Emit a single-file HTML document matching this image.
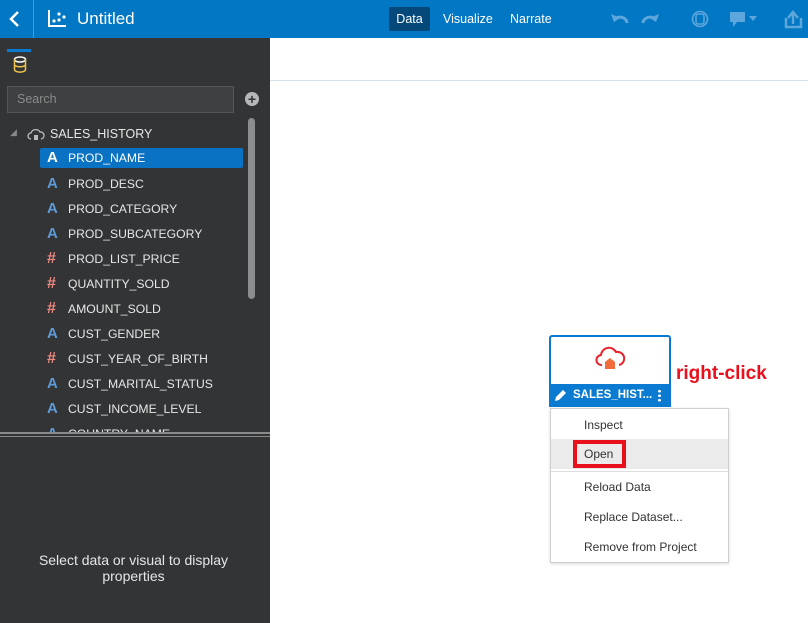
<!DOCTYPE html>
<html><head><style>
*{margin:0;padding:0;box-sizing:border-box}
body{width:808px;height:623px;overflow:hidden;font-family:"Liberation Sans",sans-serif;background:#fff;position:relative}
.hdr{position:absolute;left:0;top:0;width:808px;height:38px;background:#0277c4}
.abs{position:absolute}
.left{position:absolute;left:0;top:38px;width:270px;height:585px;background:#333436}
.item{position:absolute;left:40px;height:20px;width:203px;color:#e6e6e6;font-size:12.2px;line-height:20px}
.item span.t{position:absolute;left:28px}
.ic{position:absolute;left:7px;top:0;font-weight:bold;font-size:15px;color:#5d9bd8}
.hash{color:#f08a80;font-size:16px}
.menu div{position:absolute;left:33px;font-size:12px;color:#333}
</style></head><body>
<div class="hdr">
 <svg class="abs" style="left:8px;top:10px" width="14" height="18"><path d="M10 2L3 9l7 7" stroke="#fff" stroke-width="2.5" fill="none"/></svg>
 <div class="abs" style="left:33px;top:0;width:1px;height:38px;background:#4a9ad6"></div>
 <svg class="abs" style="left:48px;top:9px" width="20" height="18"><path d="M1 1v16h17" stroke="#fff" stroke-width="2" fill="none"/><circle cx="6" cy="12" r="1.6" fill="#fff"/><circle cx="11" cy="11" r="1.6" fill="#fff"/><circle cx="11" cy="5" r="1.6" fill="#fff"/><circle cx="16" cy="8" r="1.6" fill="#fff"/></svg>
 <div class="abs" style="left:77px;top:9px;color:#fff;font-size:17px">Untitled</div>
 <div class="abs" style="left:389px;top:7px;width:41px;height:24px;background:#04497a;border-radius:2px;color:#fff;font-size:12.5px;line-height:24px;text-align:center">Data</div>
 <div class="abs" style="left:443px;top:12px;color:#fff;font-size:12.5px">Visualize</div>
 <div class="abs" style="left:510px;top:12px;color:#fff;font-size:12.5px">Narrate</div>
 <svg class="abs" style="left:610px;top:10px" width="200" height="20" fill="#5ea7dd" stroke="#5ea7dd">
  <path d="M4 10a7 6 0 0 1 13 3" stroke-width="3" fill="none"/><path d="M1 4l3 8 6-4z" stroke="none"/>
  <path d="M46 10a7 6 0 0 0 -13 3" stroke-width="3" fill="none"/><path d="M49 4l-3 8-6-4z" stroke="none"/>
  <circle cx="90" cy="9" r="7.5" fill="none" stroke-width="1.6"/><rect x="86" y="4" width="8" height="10" rx="2" fill="none" stroke-width="1.5"/>
  <rect x="120" y="2" width="15" height="10" stroke="none"/><path d="M123 12v5l4-5z" stroke="none"/><path d="M139 6h8l-4 5z" stroke="none"/>
  <path d="M176 8v9h15v-9" stroke-width="2.5" fill="none"/><path d="M183 14V3m-5 5l5-6 5 6" stroke-width="2.5" fill="none"/>
 </svg>
</div>
<div class="left">
 <div class="abs" style="left:7px;top:11px;width:24px;height:3px;background:#0a7bd0"></div>
 <svg class="abs" style="left:13px;top:18px" width="14" height="17"><ellipse cx="7" cy="3.5" rx="5.5" ry="2.5" fill="none" stroke="#fff" stroke-width="1.5"/><path d="M1.5 3.5v10c0 3.5 11 3.5 11 0v-10M1.5 8.5c0 3 11 3 11 0" fill="none" stroke="#f0c24a" stroke-width="1.5"/></svg>
 <div class="abs" style="left:7px;top:48px;width:227px;height:27px;background:#3f4042;border:1px solid #555;color:#8a8a8a;font-size:12.5px;line-height:25px;padding-left:9px">Search</div>
 <div class="abs" style="left:245px;top:54px;width:14px;height:14px;border-radius:50%;background:#b6b7b9;color:#333;font-weight:bold;font-size:14px;line-height:14px;text-align:center">+</div>
 <div class="abs" style="left:248px;top:80px;width:7px;height:181px;border-radius:4px;background:#8c8d8f"></div>
 <div class="abs" style="left:10px;top:89px;color:#888;font-size:9px">◢</div>
 <svg class="abs" style="left:27px;top:90px" width="18" height="13"><path d="M4 11a3 3 0 0 1 0-6a5 5 0 0 1 9-1a3.5 3.5 0 0 1 1 7" fill="none" stroke="#bbb" stroke-width="1.3"/><rect x="7" y="7" width="4" height="5" fill="#bbb"/></svg>
 <div class="abs" style="left:50px;top:89px;color:#e6e6e6;font-size:12.5px">SALES_HISTORY</div>
 <div style="position:absolute;left:0;top:0;width:270px;height:395px;overflow:hidden">
 <div class="item" style="top:110px;background:#0a72c2;border-radius:2px;color:#fff"><span class="ic" style="color:#fff">A</span><span class="t">PROD_NAME</span></div>
 <div class="item" style="top:136px"><span class="ic">A</span><span class="t">PROD_DESC</span></div>
 <div class="item" style="top:161px"><span class="ic">A</span><span class="t">PROD_CATEGORY</span></div>
 <div class="item" style="top:186px"><span class="ic">A</span><span class="t">PROD_SUBCATEGORY</span></div>
 <div class="item" style="top:211px"><span class="ic hash">#</span><span class="t">PROD_LIST_PRICE</span></div>
 <div class="item" style="top:236px"><span class="ic hash">#</span><span class="t">QUANTITY_SOLD</span></div>
 <div class="item" style="top:261px"><span class="ic hash">#</span><span class="t">AMOUNT_SOLD</span></div>
 <div class="item" style="top:286px"><span class="ic">A</span><span class="t">CUST_GENDER</span></div>
 <div class="item" style="top:311px"><span class="ic hash">#</span><span class="t">CUST_YEAR_OF_BIRTH</span></div>
 <div class="item" style="top:336px"><span class="ic">A</span><span class="t">CUST_MARITAL_STATUS</span></div>
 <div class="item" style="top:361px"><span class="ic">A</span><span class="t">CUST_INCOME_LEVEL</span></div>
 <div class="item" style="top:386px"><span class="ic">A</span><span class="t">COUNTRY_NAME</span></div>
 </div>
 <div class="abs" style="left:0;top:394px;width:270px;height:2px;background:#8a8a8a"></div>
 <div class="abs" style="left:0;top:398px;width:270px;height:1px;background:#8a8a8a"></div>
 <div class="abs" style="left:0;top:514px;width:267px;text-align:center;color:#e6e6e6;font-size:14px;line-height:16px">Select data or visual to display<br>properties</div>
</div>
<div class="abs" style="left:270px;top:80px;width:538px;height:1px;background:#d8e2ea"></div>
<div class="abs" style="left:549px;top:335px;width:122px;height:72px;border:2px solid #0a7bd0;border-radius:3px;background:#fff"></div>
<svg class="abs" style="left:594px;top:345px" width="32" height="26"><path d="M8 20a5 5 0 0 1-1-10a8 8 0 0 1 15-3a5.5 5.5 0 0 1 3 13" fill="none" stroke="#e8232c" stroke-width="2"/><path d="M11 17l5-4 5 4v7h-10z" fill="#f06c3a"/></svg>
<div class="abs" style="left:549px;top:384px;width:122px;height:23px;background:#0a7bd0;color:#fff;font-size:11.5px;font-weight:bold;line-height:23px;padding-left:24px">SALES_HIST...</div>
<svg class="abs" style="left:554px;top:389px" width="13" height="13"><path d="M1 12l1-4 7-7 3 3-7 7z" fill="#fff"/></svg>
<div class="abs" style="left:658px;top:389px;width:3px;height:13px;background:radial-gradient(circle,#fff 1.3px,transparent 1.5px) 0 0/3px 4.5px"></div>
<div class="abs" style="left:676px;top:363px;color:#e8101a;font-weight:bold;font-size:19px">right-click</div>
<div class="abs menu" style="left:550px;top:408px;width:179px;height:155px;background:#fff;border:1px solid #d0d0d0;box-shadow:0 1px 3px rgba(0,0,0,.15)">
 <div style="top:9px">Inspect</div>
 <div style="left:0;top:30px;width:177px;height:30px;background:#ebebeb"></div>
 <div style="left:22px;top:31px;width:53px;height:28px;border:4px solid #e8101a"></div>
 <div style="top:38px">Open</div>
 <div style="left:0;top:62px;width:177px;height:1px;background:#ddd"></div>
 <div style="top:71px">Reload Data</div>
 <div style="top:101px">Replace Dataset...</div>
 <div style="top:131px">Remove from Project</div>
</div>
</body></html>
